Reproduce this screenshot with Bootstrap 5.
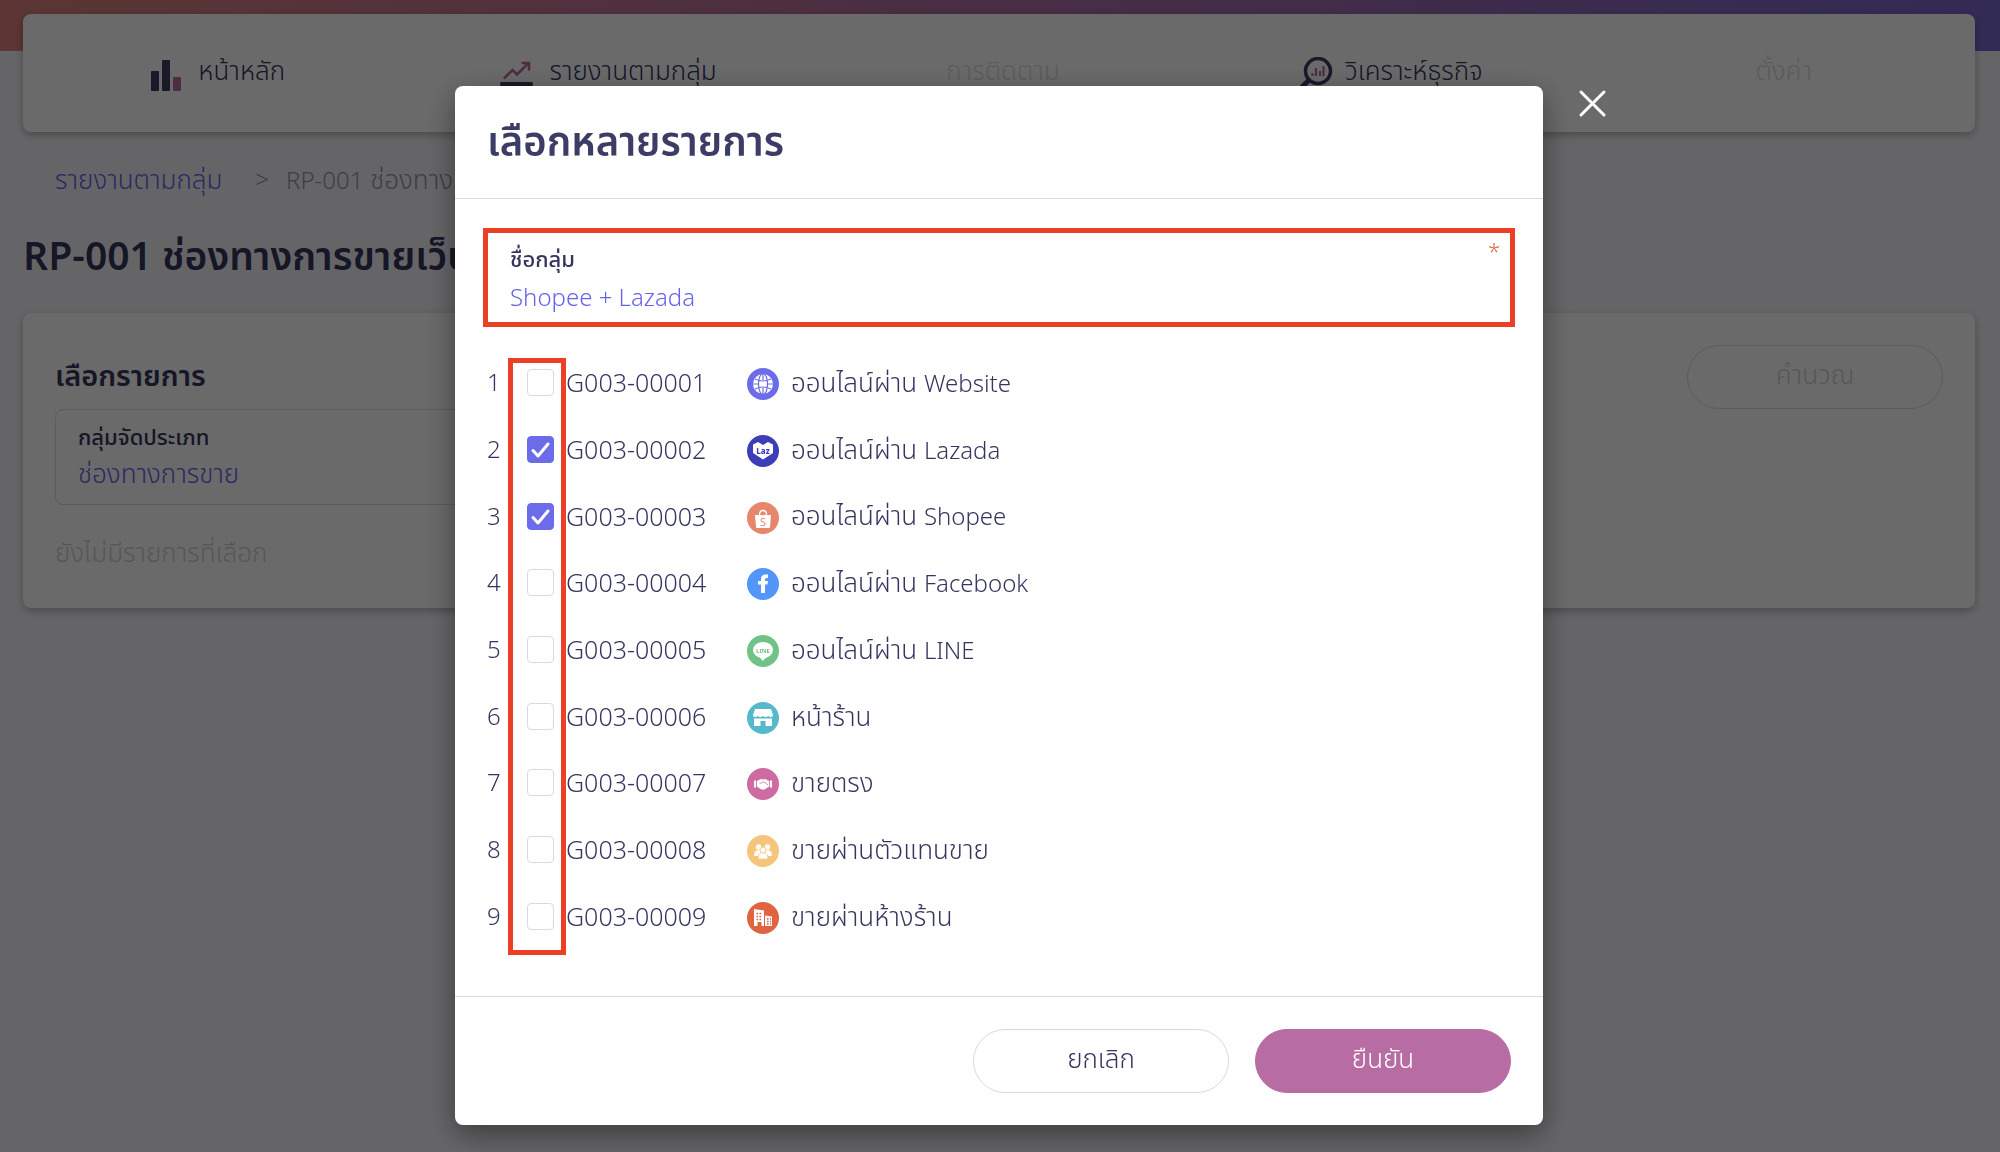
<!DOCTYPE html>
<html lang="th">
<head>
<meta charset="utf-8">
<meta name="viewport" content="width=device-width, initial-scale=1">
<title>RP-001 ช่องทางการขาย</title>
<link href="https://cdn.jsdelivr.net/npm/bootstrap@5.3.0/dist/css/bootstrap.min.css" rel="stylesheet">
<style>
:root{--ink:#35365f;--violet:#6464ea;--rose:#b76ca4;--line:#d9d9e6;--flag:#eb4026;--muted:#dcdce6}
body{font-family:"Noto Sans Thai","Noto Sans",sans-serif;font-weight:350;font-size:26px;line-height:36px;color:var(--ink);background:#f4f4f9}
.top-band{height:51px;background:linear-gradient(90deg,#dd837d,#b06da5 50%,#7a68cf)}
.page-shell{padding:0 25px 32px 23px}
.panel{background:#fff;border-radius:8px;box-shadow:0 3px 8px rgba(0,0,0,.28)}
.main-menu{height:118px;margin-top:-37px;padding-bottom:3px}
.main-menu a{color:var(--ink)}
.main-menu a.disabled{color:var(--muted)}
.crumbs{padding:31px 32px 0}
.crumbs a{color:var(--violet)}
.crumbs .sep{margin:0 17px 0 33px}
.crumbs .here,.crumbs .sep{color:#9494a6}
.page-title{font-size:39px;line-height:54px;font-weight:600;margin:32px 0 27px}
.picker{padding:32px 32px 36px}
.picker h2{font-size:29px;line-height:40px;font-weight:600;margin:12px 0 12px}
.type-box{border:1px solid var(--muted);border-radius:8px;height:96px;padding:11px 22px}
.field-label{font-size:22px;line-height:36px;font-weight:500}
.type-box select{color:var(--violet);font-weight:350;font-size:26px;line-height:36px;appearance:none}
.empty-note{color:#d0d0d9;margin-top:31px}
.pill{width:256px;height:64px;border-radius:32px;font-size:26px;font-weight:350;line-height:36px;padding:0 0 3px;border:1px solid var(--line);background:#fff;color:var(--ink)}
.pill:disabled{color:#d0d0d9;background:#fff;border-color:var(--muted);opacity:1}
.pill-main,.pill-main:hover{background:var(--rose);border-color:var(--rose);color:#fff}
.modal-backdrop{--bs-backdrop-opacity:.585}
.choose-dialog{max-width:1088px;margin-top:86px}
.modal{padding-right:2px}
.modal-content{border:0;border-radius:8px;color:var(--ink);box-shadow:0 10px 30px rgba(0,0,0,.42)}
.modal-header{padding:30px 32px 26px;border-color:var(--line)}
.modal-title{font-size:40px;line-height:56px;font-weight:600;color:#3c3d66}
.modal-body{padding:29px 28px 45px}
.name-box{border:5px solid var(--flag);height:99px;padding:10px 22px}
.name-box input{color:var(--violet);font-weight:350;font-size:24px;line-height:36px;margin-top:2px;outline:0}
.required-star{color:#e4623f;right:10px;top:2px;font-size:22px;line-height:36px}
.group-list{margin:24px 4px 0;height:600px}
.group-row{flex:1 0 0}
.group-row .num{width:40px;font-size:24px}
.group-row .form-check-input{width:27px;height:27px;margin:0 12px 3px 0;border:1px solid var(--line);border-radius:4px}
.group-row .form-check-input:checked{background-color:#6c6ceb;border-color:#6c6ceb;background-size:27px;background-image:url("data:image/svg+xml,%3Csvg xmlns='http://www.w3.org/2000/svg' viewBox='0 0 27 27'%3E%3Cpath d='M6 14.500 11 20 21 8' fill='none' stroke='%23fff' stroke-width='3' stroke-linecap='round' stroke-linejoin='round'/%3E%3C/svg%3E")}
.group-row .code{width:181px;font-size:25px}
.group-row svg{width:32px;height:32px;margin-right:12px}
.lat{font-size:24px}
.check-frame{border:5px solid var(--flag);left:21px;top:7px;bottom:-4px;width:58px;pointer-events:none}
.modal-footer{padding:32px;gap:26px;border-color:var(--line)}
.modal-footer>*{margin:0}
.close-x{left:100%;top:0;margin:1px 0 0 32px;width:34px;height:34px}
</style>
</head>
<body class="min-vh-100">
<header class="top-band"></header>
<div class="page-shell position-relative">
  <nav class="panel main-menu d-flex align-items-center">
    <div class="row g-0 flex-fill row-cols-5 text-center align-items-center">
      <a class="col d-flex justify-content-center align-items-center text-decoration-none gap-3" href="#">
        <svg width="31" height="31" viewBox="0 0 31 31" class="mt-2"><rect x="0" y="11" width="8" height="20" rx="1" fill="#3c3d66"/><rect x="11" y="0" width="8" height="31" rx="1" fill="#3c3d66"/><rect x="22" y="17" width="8" height="14" rx="1" fill="#b76ca4"/></svg>
        <span>หน้าหลัก</span></a>
      <a class="col d-flex justify-content-center align-items-center text-decoration-none gap-3" href="#">
        <svg width="33" height="25" viewBox="0 0 33 25" class="mt-1"><path d="M4 17.500 12.500 9l4.500 4.500L28 2.500M21.500 2H29v7.500" fill="none" stroke="#b76ca4" stroke-width="2.600"/><rect x="0" y="21" width="33" height="4" rx="1.500" fill="#3c3d66"/></svg>
        <span>รายงานตามกลุ่ม</span></a>
      <a class="col disabled text-decoration-none ps-2" href="#" aria-disabled="true">การติดตาม</a>
      <a class="col d-flex justify-content-center align-items-center text-decoration-none gap-2 ps-1" href="#">
        <svg width="33" height="33" viewBox="0 0 33 33" class="mt-1 me-1"><circle cx="18" cy="14" r="12.500" fill="none" stroke="#3c3d66" stroke-width="3.500"/><path d="M9 23 1 31" stroke="#3c3d66" stroke-width="5"/><path d="M12.500 19v-3M16 19v-8M20 19v-5M23.500 19V9" stroke="#b76ca4" stroke-width="2.200"/></svg>
        <span>วิเคราะห์ธุรกิจ</span></a>
      <a class="col disabled text-decoration-none ps-2" href="#" aria-disabled="true">ตั้งค่า</a>
    </div>
  </nav>
  <nav class="crumbs d-flex" aria-label="breadcrumb">
    <a class="text-decoration-none" href="#">รายงานตามกลุ่ม</a><span class="sep lat">&gt;</span><span class="here"><span class="lat">RP-001</span> ช่องทางการขาย</span>
  </nav>
  <h1 class="page-title">RP-001 ช่องทางการขายเว็บไซต์</h1>
  <section class="panel picker d-flex justify-content-between align-items-start">
    <div class="col-6">
      <h2>เลือกรายการ</h2>
      <div class="type-box d-flex flex-column">
        <label class="field-label" for="kind">กลุ่มจัดประเภท</label>
        <select id="kind" class="border-0 bg-transparent p-0"><option>ช่องทางการขาย</option></select>
      </div>
      <p class="empty-note mb-0">ยังไม่มีรายการที่เลือก</p>
    </div>
    <button class="btn pill" type="button" disabled>คำนวณ</button>
  </section>
</div>

<div class="modal-backdrop show"></div>
<div class="modal d-block" tabindex="-1" role="dialog" aria-labelledby="dlg-title">
  <div class="modal-dialog choose-dialog">
    <button type="button" class="close-x position-absolute btn p-0 border-0" aria-label="ปิด"><svg width="34" height="34" viewBox="0 0 34 34" class="d-block"><path d="M6 5 29 28M29 5 6 28" stroke="#fff" stroke-width="3" stroke-linecap="round"/></svg></button>
    <form class="modal-content">
      <div class="modal-header"><h2 class="modal-title" id="dlg-title">เลือกหลายรายการ</h2></div>
      <div class="modal-body">
        <div class="name-box position-relative d-flex flex-column">
          <label class="field-label" for="gname">ชื่อกลุ่ม</label>
          <input id="gname" type="text" class="border-0 bg-transparent px-0 py-0" value="Shopee + Lazada">
          <span class="required-star position-absolute">*</span>
        </div>
        <div class="group-list position-relative d-flex flex-column">
          <div class="group-row d-flex align-items-center"><span class="num">1</span><input class="form-check-input" type="checkbox" id="g1"><label class="code" for="g1">G003-00001</label>
            <svg viewBox="0 0 32 32"><circle cx="16" cy="16" r="16" fill="#6c6ceb"/><circle cx="16" cy="16" r="10" fill="#fff"/><g fill="none" stroke="#6c6ceb" stroke-width="1.200"><ellipse cx="16" cy="16" rx="4.500" ry="10.500"/><path d="M16 6v6M16 20v6M6 16h5.500M20.500 16H26M8 11q8 4 16 0M8 21q8-4 16 0"/></g></svg>
            <span>ออนไลน์ผ่าน <span class="lat">Website</span></span></div>
          <div class="group-row d-flex align-items-center"><span class="num">2</span><input class="form-check-input" type="checkbox" id="g2" checked><label class="code" for="g2">G003-00002</label>
            <svg viewBox="0 0 32 32"><circle cx="16" cy="16" r="16" fill="#3d3db8"/><path d="M6 9.500 11 7l5 3 5-3 5 2.500v8.500L16 24.500 6 18z" fill="#fff"/><text x="16" y="18.500" text-anchor="middle" font-family="Noto Sans" font-weight="800" font-size="8" fill="#3d3db8">Laz</text></svg>
            <span>ออนไลน์ผ่าน <span class="lat">Lazada</span></span></div>
          <div class="group-row d-flex align-items-center"><span class="num">3</span><input class="form-check-input" type="checkbox" id="g3" checked><label class="code" for="g3">G003-00003</label>
            <svg viewBox="0 0 32 32"><circle cx="16" cy="16" r="16" fill="#e6876c"/><path d="M8 13h16l-1 12q0 1-1 1H10q-1 0-1-1z" fill="#fff"/><path d="M12.500 13c0-6 7-6 7 0" fill="none" stroke="#fff" stroke-width="1.300"/><text x="16" y="23.500" text-anchor="middle" font-family="Noto Sans" font-weight="400" font-size="11" fill="#e6876c">S</text></svg>
            <span>ออนไลน์ผ่าน <span class="lat">Shopee</span></span></div>
          <div class="group-row d-flex align-items-center"><span class="num">4</span><input class="form-check-input" type="checkbox" id="g4"><label class="code" for="g4">G003-00004</label>
            <svg viewBox="0 0 32 32"><circle cx="16" cy="16" r="16" fill="#5297f7"/><path d="M14 25v-8.500h-3V13h3v-2c0-3 2-4.500 4.500-4.500H21V10h-1.500q-1.500 0-1.500 1.500V13h3l-.5 3.500H18V25z" fill="#fff"/></svg>
            <span>ออนไลน์ผ่าน <span class="lat">Facebook</span></span></div>
          <div class="group-row d-flex align-items-center"><span class="num">5</span><input class="form-check-input" type="checkbox" id="g5"><label class="code" for="g5">G003-00005</label>
            <svg viewBox="0 0 32 32"><circle cx="16" cy="16" r="16" fill="#70c287"/><ellipse cx="16" cy="15" rx="10" ry="8" fill="#fff"/><path d="M12 21h9l-5.500 5z" fill="#fff"/><text x="16" y="17.500" text-anchor="middle" font-family="Noto Sans" font-weight="700" font-size="6" fill="#70c287">LINE</text></svg>
            <span>ออนไลน์ผ่าน <span class="lat">LINE</span></span></div>
          <div class="group-row d-flex align-items-center"><span class="num">6</span><input class="form-check-input" type="checkbox" id="g6"><label class="code" for="g6">G003-00006</label>
            <svg viewBox="0 0 32 32"><circle cx="16" cy="16" r="16" fill="#56b9cb"/><path d="M8 7h16l2 6q0 2-2 2-2 0-2.700-1-1 1-2.600 1-1.700 0-2.700-1-1 1-2.700 1-1.600 0-2.600-1-.7 1-2.700 1-2 0-2-2zM7 16.500h18V24h-6.500v-5h-5v5H7z" fill="#fff"/></svg>
            <span>หน้าร้าน</span></div>
          <div class="group-row d-flex align-items-center"><span class="num">7</span><input class="form-check-input" type="checkbox" id="g7"><label class="code" for="g7">G003-00007</label>
            <svg viewBox="0 0 32 32"><circle cx="16" cy="16" r="16" fill="#cd6ba2"/><path d="M7 12.500h2v7H7zM23 12.500h2v7h-2zM9.800 13l4.200-2 2 .5 2-.5 4.200 2v5.500l-4.200 2.800q-2 .8-4 0l-4.200-2.800z" fill="#fff"/><path d="M12.500 15q2 1 3.500-1.200 3 1.200 5 3.200" fill="none" stroke="#cd6ba2" stroke-width=".8"/></svg>
            <span>ขายตรง</span></div>
          <div class="group-row d-flex align-items-center"><span class="num">8</span><input class="form-check-input" type="checkbox" id="g8"><label class="code" for="g8">G003-00008</label>
            <svg viewBox="0 0 32 32"><circle cx="16" cy="16" r="16" fill="#f5c57c"/><g fill="#fff"><circle cx="11.500" cy="12" r="2.700"/><circle cx="20.500" cy="12" r="2.700"/><path d="M7 21q0-6 4.500-6t4.500 6zM16 21q0-6 4.500-6t4.500 6z"/></g><g fill="#fff" stroke="#f5c57c" stroke-width=".8"><path d="M11 24q0-6.500 5-6.500t5 6.500z"/><circle cx="16" cy="15" r="3"/></g></svg>
            <span>ขายผ่านตัวแทนขาย</span></div>
          <div class="group-row d-flex align-items-center"><span class="num">9</span><input class="form-check-input" type="checkbox" id="g9"><label class="code" for="g9">G003-00009</label>
            <svg viewBox="0 0 32 32"><circle cx="16" cy="16" r="16" fill="#e06441"/><path d="M7 7l10 1.500V24h-2.500v-4h-4v4H7zM18 13.500l7 1V24h-7z" fill="#fff"/><g stroke="#e06441" stroke-width="1.400" stroke-dasharray="1.600 1.400"><path d="M9.500 11.500h6M9.500 14.500h6M9.500 17.500h6M20 17h4M20 19.500h4M20 22h4"/></g></svg>
            <span>ขายผ่านห้างร้าน</span></div>
          <div class="check-frame position-absolute"></div>
        </div>
      </div>
      <div class="modal-footer">
        <button type="button" class="btn pill">ยกเลิก</button>
        <button type="submit" class="btn pill pill-main">ยืนยัน</button>
      </div>
    </form>
  </div>
</div>
<script src="https://cdn.jsdelivr.net/npm/bootstrap@5.3.0/dist/js/bootstrap.bundle.min.js"></script>
</body>
</html>
